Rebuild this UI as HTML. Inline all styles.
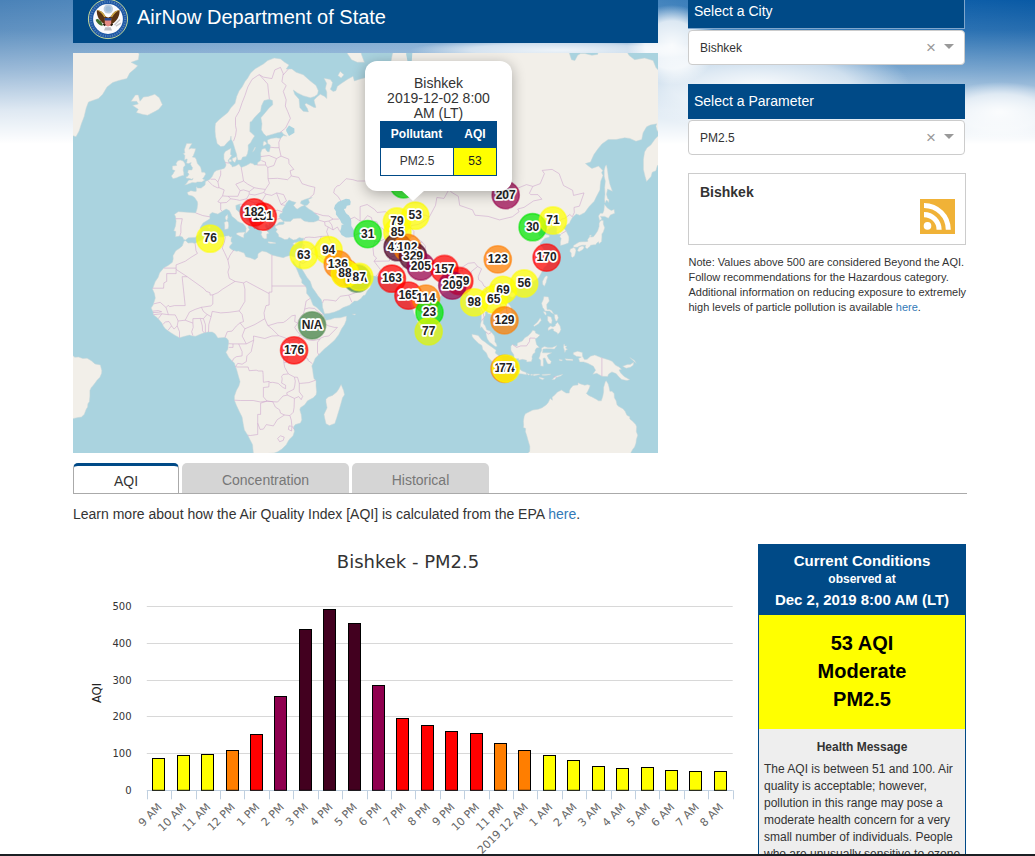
<!DOCTYPE html>
<html lang="en">
<head>
<meta charset="utf-8">
<title>AirNow Department of State</title>
<style>
html,body{margin:0;padding:0}
body{width:1035px;height:856px;overflow:hidden;position:relative;background:#fff;font-family:"Liberation Sans",Arial,sans-serif;color:#333}
.abs{position:absolute}
#sky{left:0;top:0;width:1035px;height:200px;background:linear-gradient(to right,#4a82b8 0%,#5d92c4 25%,#6a9ccb 50%,#3c7fbb 66%,#1565ad 82%,#0a5aa5 100%)}
#skyfade{left:0;top:0;width:1035px;height:200px;background:
radial-gradient(ellipse 45px 40px at 672px 45px,rgba(255,255,255,.95) 0%,rgba(255,255,255,.8) 60%,rgba(255,255,255,0) 100%),
radial-gradient(ellipse 150px 45px at 760px 85px,rgba(255,255,255,.9) 0%,rgba(255,255,255,.6) 60%,rgba(255,255,255,0) 100%),
radial-gradient(ellipse 70px 30px at 1000px 112px,rgba(255,255,255,.9) 0%,rgba(255,255,255,.6) 60%,rgba(255,255,255,0) 100%),
radial-gradient(ellipse 150px 11px at 560px 50px,rgba(255,255,255,.85) 0%,rgba(255,255,255,.6) 60%,rgba(255,255,255,0) 100%),
linear-gradient(to bottom,rgba(255,255,255,0) 0%,rgba(255,255,255,.12) 15%,rgba(255,255,255,.45) 35%,rgba(255,255,255,.82) 55%,#fff 72%)}
#hdr{left:73px;top:0;width:585px;height:43px;background:#004a87}
#hdr .t{position:absolute;left:64px;top:6px;font-size:20px;color:#fff;white-space:nowrap}
#map{left:73px;top:53px;width:585px;height:400px;background:#aad3df;overflow:hidden}
.sh{left:688px;width:277px;height:29px;background:#004a87;color:#fff;font-size:14px}
.sh span{position:absolute;left:6px;top:2px}
.sel{left:688px;width:275px;height:33px;background:#fff;border:1px solid #ccc;border-radius:4px;font-size:12px;color:#333}
.sel span{position:absolute;left:11px;top:10px}
.sel i{position:absolute;font-style:normal}
.sel .x{left:237px;top:7px;font-size:17px;color:#999;font-weight:normal}
.sel .c{left:255px;top:13px;width:0;height:0;border-left:5px solid transparent;border-right:5px solid transparent;border-top:5px solid #999}
#city{left:688px;top:173px;width:276px;height:70px;background:#fff;border:1px solid #ccc}
#city b{position:absolute;left:11px;top:10px;font-size:14px;color:#333}
#rss{left:920px;top:199px;width:35px;height:35px}
#note{left:688.5px;top:255px;width:290px;font-size:11px;line-height:15px;color:#333}
a{color:#337ab7;text-decoration:none}
.tab{top:463px;height:30px;font-size:14px;text-align:center;box-sizing:border-box;border-radius:5px 5px 0 0}
.tab span{display:block;padding-top:9px}
#t1{left:73px;width:106px;background:#fff;border:1px solid #aaa;border-bottom:none;border-top:3px solid #004a87;color:#333}
#t1 span{padding-top:7px}
#t2{left:182px;width:167px;background:#d5d5d5;color:#777}
#t3{left:352px;width:137px;background:#d5d5d5;color:#777}
#tline{left:73px;top:493px;width:894px;height:1px;background:#aaa}
#learn{left:73px;top:506px;font-size:14px;color:#333;white-space:nowrap}
#chart{left:73px;top:530px;width:680px;height:326px}
.yl{font-family:"DejaVu Sans",Verdana,sans-serif;font-size:10px;fill:#333}
.xl{font-family:"DejaVu Sans",Verdana,sans-serif;font-size:11px;fill:#666}
#cc{left:758px;top:544px;width:208px;height:320px;background:#eee;box-sizing:border-box;border-left:1px solid #004a87;border-right:1px solid #004a87}
#cch{left:758px;top:544px;width:208px;height:71px;background:#004a87;color:#fff;text-align:center;font-weight:bold}
#ccy{left:759px;top:615px;width:206px;height:114px;background:#ffff00;color:#000;text-align:center;font-weight:bold;font-size:20px;line-height:28px}
#hm{left:758px;top:740px;width:208px;text-align:center;font-weight:bold;font-size:12px;color:#333}
#hmt{left:764px;top:761px;width:200px;font-size:12px;line-height:17px;color:#333}
#btm{left:0;top:854px;width:1035px;height:2px;background:#1b1f23}
.ml text{font-family:"Liberation Sans",Arial,sans-serif;font-size:12px;font-weight:bold;fill:#222;text-anchor:middle;stroke:#fff;stroke-width:3.6px;stroke-linejoin:round;paint-order:stroke}
#pop{left:292px;top:8px;width:147px;height:130px;background:#fff;border-radius:12px;box-shadow:0 3px 14px rgba(0,0,0,.3)}
#popc{position:absolute;left:0;top:15px;width:147px;text-align:center;font-size:14px;line-height:15px;color:#333}
#pth{left:15px;top:60px;width:117px;height:26px;background:#004a87;color:#fff;font-weight:bold;font-size:12px}
#pth span{position:absolute;top:6px;text-align:center}
#ptd{left:15px;top:86px;width:115px;height:27px;background:#fff;border:1px solid #004a87;font-size:12px;color:#333}
#ptd span{position:absolute;top:0;text-align:center;line-height:27px}
</style>
</head>
<body>
<div id="sky" class="abs"></div>
<div id="skyfade" class="abs"></div>

<div id="hdr" class="abs">
<svg class="abs" style="left:14px;top:-2px;overflow:visible" width="42" height="42" viewBox="0 0 42 42">
<circle cx="21" cy="21" r="19.600" fill="#1d57a3" stroke="#c3d79a" stroke-width="1"/>
<circle cx="21" cy="21" r="17.200" fill="none" stroke="#7fa3d3" stroke-width="2.200" stroke-dasharray="1.100 1.300" opacity=".5"/>
<circle cx="21" cy="21" r="14.900" fill="#fbfbfd"/>
<circle cx="21.300" cy="11" r="4.700" fill="#b9cbdf"/>
<circle cx="21.300" cy="11" r="2.800" fill="#9fbcd8"/>
<path d="M9.800 12.300C12.500 11.800 16 14 18.600 18.500L21.200 19.600L23.800 18.500C26.400 14 29.900 11.800 32.600 12.300C32.800 18 30.200 23.200 25.200 25.800L23.500 27.500H18.900L17.200 25.800C12.200 23.200 9.600 18 9.800 12.300Z" fill="#5b3413"/>
<path d="M9.800 12.300C12.500 11.800 16 14 18.600 18.500L17.300 19.200C15.200 15.600 12.800 13.300 9.800 12.300ZM32.600 12.300C29.900 11.800 26.400 14 23.800 18.500L25.100 19.200C27.200 15.600 29.600 13.300 32.600 12.300Z" fill="#d2ab45"/>
<circle cx="21" cy="17.300" r="1.900" fill="#fff"/>
<path d="M17.800 20h6.400v5.200c0 1.800-1.400 2.800-3.200 3.400-1.800-0.600-3.200-1.600-3.200-3.400z" fill="#e58a84"/>
<path d="M17.800 20h6.400v2.500h-6.400z" fill="#27498f"/>
<path d="M8.800 21.500c1.500-1 3-0.500 3.800 1 1 0.200 2 1.200 2.300 2.500 0.800 0.800 1 1.800 0.600 2.800-2.200-0.300-4.200-1.600-5.400-3.300-0.900-0.900-1.400-2-1.300-3z" fill="#3f7030"/>
<path d="M27 26.500l5.500-5.500 1 1-5.500 5.500zM28.500 27.500l5-3 0.700 1.200-5 3z" fill="#c8c8cc"/>
<path d="M18.300 29.300h5.400l1.300 3.200h-8z" fill="#bdbdc3"/>
<path d="M16.300 26l2 1.500M25.700 26l-2 1.500" stroke="#2a1a0c" stroke-width="1.600"/>
</svg>
<div class="t">AirNow Department of State</div>
</div>

<div id="map" class="abs">
<svg class="abs" style="left:0;top:0" width="585" height="400" viewBox="0 0 585 400">
<path d="M201.2 5.0L207.5 5.9L211.7 9.3L216.0 11.9L213.2 16.0L218.9 16.0L223.1 19.3L230.2 21.7L237.3 28.0L243.0 32.5L245.3 37.7L244.5 41.3L241.6 43.4L237.3 44.8L230.2 42.7L224.5 39.9L220.3 37.0L221.7 41.3L226.0 46.2L226.8 54.4L230.2 58.3L235.4 58.9L234.5 55.7L231.9 51.7L233.1 50.3L237.3 52.4L241.0 54.4L243.0 54.4L241.6 49.7L241.0 46.9L243.9 44.1L247.3 41.3L251.6 43.4L253.8 45.5L253.8 39.1L252.4 35.5L253.6 30.3L251.0 25.3L257.3 26.4L259.5 29.5L258.7 33.3L257.3 36.2L260.1 38.4L262.9 37.7L264.4 33.3L268.6 30.3L274.3 26.4L280.0 23.3L281.4 28.0L285.7 26.4L291.4 24.9L295.7 23.3L299.9 16.9L299.1 15.2L304.2 16.9L311.3 20.1L315.6 22.5L319.8 27.2L323.5 24.1L319.3 17.7L317.8 9.3L319.3 1.4L322.7 -7.8L355.4 -17.5L412.3 -44.6L449.3 -22.6L469.2 -14.5L489.1 -17.5L495.6 -2.2L498.5 6.7L501.9 7.6L504.7 2.3L507.6 0.5L511.8 0.5L518.9 2.3L524.6 1.4L527.5 -8.7L543.1 -6.8L553.1 -3.1L555.9 2.3L561.6 6.7L571.6 5.0L580.1 7.6L582.9 14.4L585.8 17.7L600.0 17.7L611.4 82.6L596.6 83.1L592.3 88.2L592.0 94.2L590.6 96.3L592.0 103.1L588.6 104.1L587.8 109.1L588.3 111.1L584.4 112.5L582.9 117.8L579.2 119.2L578.1 123.4L573.6 128.5L572.1 123.4L570.4 116.4L570.4 106.6L571.6 98.9L574.1 94.7L577.8 92.0L582.1 86.0L587.2 80.9L591.5 73.8L595.7 67.8L591.5 67.8L587.2 73.8L584.4 78.6L582.9 73.2L583.8 70.8L577.3 72.0L573.6 73.8L570.1 79.7L568.7 86.5L563.0 88.2L556.8 85.4L551.7 84.8L543.1 86.5L535.2 86.5L528.9 90.9L524.6 96.3L520.9 101.5L517.5 109.1L512.4 110.6L516.7 114.0L518.9 115.4L521.8 114.5L525.5 113.0L529.8 117.4L528.6 119.7L530.0 122.5L527.8 128.0L527.2 132.5L526.9 136.9L523.2 144.1L521.2 148.3L516.1 153.6L511.8 159.5L506.7 162.2L503.3 161.1L499.6 164.2L496.8 169.1L496.8 169.9L491.9 172.9L490.5 174.7L493.1 178.0L495.9 183.8L495.9 187.3L495.3 190.1L490.5 191.8L487.4 192.5L487.4 189.1L488.2 185.5L486.8 183.8L487.9 181.6L484.2 180.9L483.4 179.1L484.2 175.5L481.7 173.2L477.7 174.3L473.4 177.3L473.7 175.1L475.4 171.0L474.3 169.5L472.0 169.9L468.0 173.2L463.5 175.8L462.6 178.0L465.8 180.9L466.3 183.1L469.2 182.3L471.4 180.9L476.3 182.3L476.3 184.1L472.0 185.2L470.0 187.3L467.2 190.5L466.9 191.5L470.0 194.9L471.7 198.7L474.6 202.0L474.6 204.7L471.7 206.7L474.9 208.0L473.7 212.6L471.2 214.2L468.0 220.6L465.5 225.0L462.9 226.8L459.8 229.0L454.9 230.9L452.7 232.1L450.7 232.4L447.8 233.9L442.1 235.5L441.3 238.2L440.2 237.9L440.2 234.9L436.5 234.3L434.7 234.6L431.6 236.7L430.8 238.5L428.8 241.5L430.8 245.7L433.6 249.3L435.9 251.1L437.9 254.0L438.7 258.4L438.4 262.8L437.3 264.8L433.6 267.2L431.6 267.7L431.1 270.1L427.4 272.4L425.9 272.6L426.2 269.2L425.1 267.5L422.5 266.9L420.8 264.6L419.4 262.5L416.8 261.1L414.8 260.8L414.8 258.7L413.7 258.4L412.3 259.0L412.3 262.2L411.1 264.3L410.3 267.5L410.3 270.6L412.3 272.9L413.7 276.7L416.5 277.8L418.8 279.5L421.4 283.0L421.9 285.8L421.9 288.7L423.4 290.9L424.2 293.2L422.2 293.5L419.4 291.2L416.3 288.9L414.3 285.8L413.1 281.8L413.1 279.0L411.4 277.5L408.6 273.8L407.4 274.9L407.4 271.5L408.3 268.6L408.3 264.3L408.3 261.4L407.2 257.0L405.7 252.6L405.5 249.6L403.2 248.1L401.5 249.6L399.2 251.7L396.1 251.1L396.9 246.6L396.1 243.0L394.1 239.7L392.1 238.5L390.4 236.4L389.2 232.1L387.8 230.6L385.3 231.2L384.7 233.3L381.0 233.6L378.7 233.9L375.3 234.6L375.0 236.7L373.6 239.1L370.2 240.3L366.8 244.2L362.2 248.1L359.7 250.2L357.9 251.7L355.7 253.4L355.7 257.0L356.2 259.6L355.1 262.8L354.8 267.7L353.4 267.7L352.3 270.6L350.3 271.8L348.3 274.1L345.7 271.8L344.6 268.6L343.2 264.6L340.9 260.2L339.5 255.5L338.0 252.6L336.3 248.1L335.2 242.4L334.6 238.5L335.2 234.6L334.1 233.9L333.2 235.8L329.8 237.0L326.9 236.1L323.8 232.1L326.9 231.2L327.8 229.9L323.0 229.3L321.8 227.8L319.5 226.8L318.4 224.3L317.0 222.5L311.3 223.1L304.2 223.4L301.3 223.1L295.7 222.5L290.8 221.2L289.7 217.4L287.1 217.4L282.9 218.7L278.6 217.4L277.2 215.5L274.3 214.5L272.3 211.3L270.6 207.7L267.2 206.4L265.8 207.7L264.4 208.3L264.4 210.0L265.8 212.6L266.6 215.5L269.5 218.0L270.3 219.9L270.6 222.1L272.3 224.3L272.3 222.1L272.9 220.3L274.6 221.2L274.3 225.0L274.6 226.2L277.2 226.2L281.4 226.2L282.9 225.3L285.1 222.8L287.4 220.3L288.3 219.3L288.0 221.8L288.8 225.3L291.4 227.5L294.5 228.1L297.9 231.5L297.1 234.6L294.2 237.9L292.2 242.1L290.0 242.7L288.0 245.4L284.3 248.1L281.4 248.1L276.3 252.3L270.1 254.6L266.4 257.0L261.5 259.0L255.8 260.5L251.6 260.8L251.0 259.0L249.6 254.3L249.3 249.9L248.2 246.6L245.0 242.7L242.2 238.5L239.3 234.6L237.3 228.4L233.9 224.3L231.7 220.6L228.8 215.8L227.4 213.9L226.8 209.3L225.4 214.2L225.1 214.8L223.4 212.6L221.7 210.3L220.6 208.0L220.0 209.3L220.8 211.6L223.1 214.8L224.5 218.0L226.8 223.7L228.8 226.8L228.8 229.9L232.5 233.0L233.6 236.1L233.6 240.3L237.3 245.1L239.6 251.1L240.2 252.3L243.9 254.6L246.7 257.6L250.1 261.1L251.0 264.0L253.0 267.2L257.3 266.6L261.5 265.1L267.2 264.8L273.5 263.1L273.2 267.2L271.5 271.5L268.6 275.8L265.8 281.5L261.5 287.2L256.7 291.5L251.6 295.8L247.3 300.0L244.5 302.9L242.2 305.2L240.8 308.9L238.8 312.9L239.6 316.6L240.2 321.5L241.0 325.8L243.0 327.5L243.0 333.0L243.6 338.9L243.0 341.8L240.2 344.8L234.5 347.8L231.7 351.7L227.4 354.7L226.8 356.8L228.2 361.4L228.8 366.9L227.4 370.1L222.3 371.6L220.6 373.8L221.4 378.6L220.0 382.8L216.0 386.7L213.2 391.7L208.9 396.1L204.6 398.8L200.9 400.1L194.7 400.5L190.4 400.8L184.7 402.9L180.5 401.2L179.9 395.7L179.6 391.7L177.0 386.7L174.8 382.2L171.4 377.0L170.2 370.7L169.1 364.1L166.2 358.3L163.4 352.3L161.4 347.2L161.4 343.3L163.4 337.4L165.9 333.0L167.1 328.7L165.4 322.9L163.4 315.7L162.5 313.7L161.4 310.0L159.1 308.0L155.7 304.3L153.4 300.0L152.9 299.2L154.9 296.3L155.1 292.9L155.7 290.1L155.4 287.2L153.4 285.0L152.0 284.4L147.7 284.7L144.9 285.0L142.1 280.7L139.2 279.0L134.9 279.0L131.2 279.8L127.8 281.0L122.7 283.2L119.3 283.0L116.5 282.1L110.8 283.5L106.5 284.7L102.2 282.4L97.1 279.2L92.3 275.8L90.3 272.9L88.9 270.1L85.7 266.3L83.7 264.3L80.3 261.7L80.0 258.7L78.1 254.9L80.3 251.7L80.9 249.6L82.3 245.1L81.5 240.6L79.5 236.1L82.3 228.4L85.2 224.3L86.6 219.9L90.9 214.8L95.1 212.6L99.4 209.3L100.2 206.0L100.0 202.7L102.8 197.7L106.2 195.6L109.3 192.9L111.1 188.0L112.8 187.7L115.0 190.1L119.3 189.8L122.1 190.5L125.0 188.4L129.3 186.6L132.1 185.5L136.4 184.5L142.1 184.5L146.3 183.8L150.0 184.1L153.4 183.1L156.0 182.7L157.1 184.1L159.1 183.8L158.0 185.9L158.0 188.4L159.4 190.1L156.6 193.2L156.6 194.9L159.4 197.0L163.4 198.3L165.4 198.0L171.1 200.0L172.8 203.7L177.6 205.0L181.9 206.7L184.7 204.4L185.0 200.7L189.0 198.0L193.5 199.0L198.9 202.0L204.6 203.4L210.3 204.7L213.2 203.4L216.0 202.7L218.9 203.0L219.7 203.7L223.1 204.0L225.4 203.0L226.8 200.0L227.4 197.7L228.8 194.6L229.9 191.5L229.7 188.0L230.8 185.2L228.8 185.2L226.3 184.5L223.1 186.6L220.3 187.0L216.0 184.5L214.6 186.3L211.7 186.6L208.3 184.8L205.8 183.8L205.2 180.9L202.9 178.7L204.3 176.6L202.4 174.7L202.4 173.1L206.1 171.8L210.3 171.4L211.5 170.1L210.6 169.1L210.9 168.2L213.7 168.4L217.4 168.4L220.3 165.7L224.5 165.3L227.7 165.3L231.1 168.0L235.9 169.1L240.8 169.1L245.9 167.2L246.2 163.8L243.0 161.1L239.3 157.9L235.9 156.0L233.9 154.4L232.2 152.8L234.5 151.9L236.5 149.5L235.4 146.6L239.3 144.5L236.5 145.0L232.5 146.2L228.2 147.9L227.4 150.3L231.4 152.4L228.2 153.6L224.5 156.0L223.1 155.6L220.6 152.4L223.1 149.5L218.9 148.3L216.0 147.0L213.2 150.3L212.0 152.8L209.5 156.4L209.2 159.9L207.2 160.7L206.1 163.4L207.5 165.7L210.2 168.0L210.0 168.9L206.1 169.3L203.8 171.4L202.1 172.3L201.8 170.3L198.9 169.5L196.1 170.3L195.8 172.9L194.4 172.1L193.0 171.0L192.1 172.9L193.3 175.5L193.8 178.0L196.1 180.2L193.8 180.9L193.8 185.5L191.8 185.9L189.6 184.5L188.1 181.3L189.0 179.1L187.0 177.3L185.3 174.7L183.0 171.8L183.3 167.2L181.9 164.6L179.0 162.6L174.8 159.5L171.1 156.8L169.1 152.8L167.1 154.0L166.8 151.1L162.8 152.4L163.1 156.4L166.5 159.5L168.2 163.8L171.1 165.7L173.9 166.1L173.3 167.6L176.2 169.1L180.5 172.5L179.3 173.2L176.2 171.4L175.1 174.3L176.5 176.6L174.8 178.7L172.5 180.6L172.8 178.0L173.3 175.5L172.2 172.9L169.9 170.6L168.2 169.9L164.8 168.4L162.5 166.1L159.1 163.4L157.7 160.3L156.3 157.6L153.1 156.0L149.2 158.3L144.9 161.1L142.1 160.3L139.2 159.5L136.7 161.5L136.9 163.8L136.9 165.7L134.1 167.6L130.1 169.9L127.8 173.6L127.0 175.1L128.4 177.3L126.1 180.2L125.6 181.6L122.1 184.5L115.3 184.8L112.5 187.0L110.8 186.6L109.6 184.1L106.8 183.1L102.5 183.8L102.8 178.4L100.8 177.7L102.5 172.9L103.1 168.4L102.5 163.4L101.4 161.5L105.1 158.7L110.8 159.1L117.0 159.5L122.7 159.9L124.1 155.6L124.7 151.1L124.4 148.7L121.6 144.5L119.3 142.9L115.3 142.0L114.2 139.5L117.9 137.7L122.1 138.6L123.3 138.2L123.3 133.8L124.7 135.1L128.1 135.1L132.1 132.0L132.4 128.5L136.4 126.7L139.2 123.4L141.2 119.2L143.5 117.4L147.7 116.4L151.2 115.4L152.3 114.0L153.1 112.0L152.3 109.1L150.9 106.1L150.9 101.0L152.3 98.4L158.0 95.2L157.4 101.5L158.8 102.5L156.8 105.1L155.1 107.6L156.0 110.1L158.8 112.5L159.1 114.0L162.5 113.0L165.9 111.1L168.2 114.5L173.3 112.5L177.6 110.1L180.7 111.1L181.0 112.0L184.2 112.0L184.7 109.6L187.6 107.6L187.9 104.1L187.6 100.0L189.0 96.3L192.1 95.2L194.1 98.4L196.1 98.9L197.2 94.7L197.2 92.0L194.7 90.4L194.4 87.1L198.1 85.4L203.2 84.8L207.5 85.4L210.3 82.6L213.7 83.1L210.3 80.9L208.9 79.1L204.6 79.7L198.9 81.4L193.3 83.1L190.4 80.3L188.4 76.8L189.0 70.8L187.9 64.7L191.8 60.2L196.1 55.0L199.8 51.7L199.5 47.6L196.4 46.2L191.0 47.6L188.4 53.0L187.6 58.3L185.6 60.2L181.3 64.7L178.5 68.4L177.0 69.0L176.8 76.8L176.8 78.6L179.6 80.9L181.6 83.1L179.3 86.5L177.6 89.8L175.1 92.0L175.3 96.3L174.5 100.5L173.1 103.6L169.6 104.1L168.2 107.1L164.8 107.1L164.0 104.1L163.7 101.5L162.0 96.3L161.7 95.2L159.7 88.7L158.3 86.5L158.0 83.1L157.1 87.1L154.9 88.7L151.2 93.1L147.7 93.6L144.0 90.4L143.8 88.7L142.6 83.7L142.1 78.6L142.1 73.8L142.6 70.2L146.3 66.5L150.0 63.4L154.9 59.6L157.7 55.0L162.0 50.3L163.7 43.4L166.2 37.7L169.1 34.0L171.9 28.7L174.8 24.9L177.6 20.1L181.9 16.0L186.1 13.5L190.4 11.0L194.7 7.6ZM111.6 132.0L115.9 130.7L119.3 129.4L122.4 129.8L124.4 128.9L128.7 128.9L131.8 127.1L129.5 125.7L130.7 124.4L132.7 121.1L131.5 119.2L128.7 119.2L128.1 115.9L127.5 114.0L124.4 110.6L123.3 106.6L122.1 104.6L119.3 104.1L120.4 102.5L121.9 98.4L122.7 95.8L118.2 95.2L115.9 96.3L116.7 94.2L119.0 90.4L113.6 90.4L112.5 93.6L111.3 96.8L111.9 100.0L110.2 100.5L111.9 102.5L111.6 107.1L113.3 106.1L114.2 106.1L113.9 109.1L113.3 110.1L115.3 110.6L118.2 109.6L117.6 111.6L118.7 113.5L119.6 114.5L119.0 116.9L115.3 116.9L114.7 119.7L116.2 121.1L114.5 123.4L112.8 123.9L113.6 125.3L115.9 125.3L118.7 126.2L120.2 125.3L119.3 127.1L115.9 127.1L114.7 128.5L113.6 130.3ZM110.8 122.5L109.6 122.5L106.5 123.4L103.7 124.8L100.0 125.7L98.3 123.0L100.2 120.7L101.1 118.8L102.2 117.8L99.4 116.4L99.4 113.0L103.7 112.5L103.1 110.6L104.5 108.1L107.1 107.1L110.2 108.1L111.9 110.6L112.2 112.5L110.5 114.0L110.2 117.4L110.8 119.7ZM58.1 48.3L62.4 42.0L65.3 42.0L67.0 48.3L70.4 44.1L75.2 43.4L81.8 41.3L86.3 44.8L89.4 51.7L85.7 56.3L82.3 58.3L74.6 62.2L70.1 61.5L63.3 59.6L65.3 56.3L59.6 52.4L65.3 51.0L63.8 48.3ZM3.0 83.7L6.1 78.0L8.4 70.8L11.2 63.4L13.2 55.0L15.5 49.0L21.2 46.9L25.4 45.5L29.7 41.3L34.0 34.0L39.7 29.5L46.8 27.2L53.9 25.6L56.7 20.1L62.4 15.2L64.7 12.7L58.1 9.3L65.3 6.7L66.1 1.4L63.8 -5.9L65.3 -12.6L-28.6 -12.6L-28.6 70.8L-8.7 78.0L-3.0 81.4L-0.7 82.6ZM1.8 304.3L5.5 304.0L9.8 305.5L14.1 305.2L18.3 307.7L22.0 310.9L27.4 312.0L28.3 315.7L28.8 317.4L28.6 320.3L26.9 324.3L24.0 327.2L22.0 330.1L19.7 333.0L18.3 334.5L16.9 337.4L16.9 343.3L16.3 348.7L14.9 350.8L14.6 354.1L13.2 356.2L11.2 361.4L8.4 364.1L5.0 364.5L0.7 365.4L-3.9 367.6L-28.6 370.7L-28.6 300.0L-3.0 300.0ZM268.1 331.6L270.6 337.4L271.5 341.8L269.5 344.8L268.3 349.3L266.6 355.3L263.8 364.5L261.8 370.4L256.4 372.6L253.0 370.7L251.9 366.0L251.0 361.4L254.1 354.7L253.0 349.3L253.0 346.3L255.3 343.9L259.5 342.4L263.8 338.9L265.8 336.0ZM355.4 269.2L358.8 272.9L360.5 275.8L360.2 278.7L357.1 280.4L355.1 277.5L354.8 274.4L355.4 271.5ZM530.3 167.6L530.3 171.0L531.7 174.7L530.3 179.1L528.9 180.9L528.9 184.1L528.6 188.4L526.1 190.8L525.5 188.7L523.8 190.1L522.6 191.8L520.9 191.8L517.5 192.2L517.2 193.2L515.5 194.6L514.1 196.0L512.1 194.3L512.7 192.2L509.0 192.2L506.1 193.2L504.2 194.3L500.5 194.3L500.5 192.5L503.3 190.8L506.1 189.1L509.8 188.7L512.7 188.7L514.7 188.4L514.7 186.3L516.7 183.8L516.7 182.3L518.4 182.0L517.5 184.1L520.4 183.8L522.6 180.9L524.6 178.0L526.1 173.6L526.1 170.6L526.9 168.4L528.6 167.2ZM526.6 167.6L528.9 166.1L527.5 163.4L528.9 163.4L531.7 163.4L535.4 165.3L537.4 161.9L541.7 160.3L541.1 156.4L538.3 157.6L534.6 155.2L531.5 151.5L530.9 157.6L529.8 160.3L527.2 160.3L525.5 163.0ZM500.5 194.6L502.4 195.6L503.0 197.7L501.6 203.0L499.6 204.4L498.2 203.4L498.2 200.0L496.8 198.3L497.3 196.0L499.0 195.3ZM510.7 193.6L511.0 194.9L509.6 196.7L506.1 198.7L504.4 197.7L505.9 194.3L509.0 192.9ZM533.5 112.0L534.6 117.8L535.4 124.4L536.9 131.2L539.4 138.2L534.6 136.0L533.5 141.2L534.6 145.4L536.0 146.6L535.7 149.5L533.7 147.0L532.0 149.9L531.5 146.2L532.0 141.2L531.7 134.7L532.3 128.0L531.2 123.4L531.2 117.4L532.3 113.0ZM473.4 222.8L474.9 223.7L473.7 226.8L473.1 229.6L471.4 233.3L469.7 231.2L469.5 228.4L471.2 225.0L472.0 223.7ZM442.7 238.8L443.6 240.3L442.1 242.7L439.6 244.5L437.0 243.6L436.7 241.2L438.7 239.4L440.7 239.1ZM470.9 243.6L475.4 243.9L476.3 248.1L473.7 251.4L474.0 256.4L476.3 256.4L478.6 257.6L480.8 261.1L478.6 259.9L476.6 258.1L472.0 257.9L470.9 256.1L469.7 254.6L468.6 250.2L470.3 246.6ZM470.3 258.7L472.6 258.7L473.4 261.1L472.6 262.2L471.4 260.8ZM481.4 261.4L484.2 261.4L485.4 264.8L484.0 268.0L482.8 268.0L481.7 264.8ZM474.6 263.1L478.0 264.0L479.1 267.2L478.6 270.6L476.6 270.3L474.6 267.5ZM484.5 269.2L487.1 272.9L487.9 276.4L486.8 279.2L484.8 281.2L484.2 279.8L480.5 277.8L480.5 276.1L478.8 275.8L475.1 277.5L475.1 274.9L477.7 272.9L480.0 274.1L482.5 272.6L482.5 271.5ZM467.2 264.8L468.3 267.2L465.5 270.9L461.2 273.5L460.6 272.6L464.3 269.2L466.3 266.3ZM437.9 292.9L439.6 291.5L441.6 292.4L444.1 293.2L444.4 290.1L449.3 288.1L451.8 284.7L454.9 283.0L457.8 280.1L459.8 277.2L462.1 278.1L462.6 280.1L466.9 282.1L464.0 285.0L462.3 285.5L462.9 288.7L463.5 291.5L466.3 294.4L463.5 294.9L462.1 297.2L462.1 299.5L460.1 300.9L458.9 303.7L459.2 305.7L458.4 308.6L453.8 308.9L453.5 307.2L449.3 306.3L445.8 307.2L445.6 305.7L441.3 305.7L440.7 301.5L438.2 298.1L437.9 296.3ZM398.9 281.2L405.2 282.4L407.4 285.2L408.6 286.7L412.3 289.2L415.1 291.5L419.4 294.4L420.8 295.5L423.1 297.2L422.2 300.0L425.1 302.3L426.2 303.7L429.3 305.7L428.8 308.6L428.8 313.7L427.1 314.0L425.1 313.2L422.2 311.2L418.8 308.3L415.1 304.3L413.4 300.0L409.7 296.3L408.9 292.4L405.7 290.4L400.9 285.8L399.2 283.5ZM427.9 316.6L429.3 314.0L431.6 314.6L435.9 315.2L436.7 316.3L441.9 316.9L443.3 315.4L448.1 316.9L448.4 317.7L453.2 319.5L453.5 321.8L449.3 320.9L443.6 320.6L440.7 319.7L436.5 319.2L430.5 318.3ZM453.5 320.3L456.9 321.2L455.5 322.3ZM457.8 321.2L459.8 321.2L459.2 322.6L457.8 322.3ZM460.1 321.2L466.3 320.9L466.9 321.5L460.6 322.9ZM468.9 321.5L477.7 320.9L477.1 321.8L472.0 322.6L468.9 322.3ZM466.3 324.1L471.4 325.5L469.7 326.7L466.3 325.2ZM479.1 326.7L482.0 323.5L489.9 321.2L487.7 322.9L483.4 324.6L481.7 326.4ZM468.6 294.9L471.4 293.5L474.9 294.4L479.1 294.6L484.0 292.6L481.4 296.1L477.7 295.8L473.4 295.8L470.0 296.1L469.5 299.8L473.4 299.8L478.8 299.8L474.9 301.8L474.0 302.6L475.7 305.7L478.3 308.6L477.4 310.9L474.9 310.9L473.7 308.9L472.0 304.9L470.0 305.5L470.3 307.2L470.3 310.9L470.3 313.2L467.7 312.9L467.7 307.2L465.8 305.2L466.9 302.9L467.2 300.6L468.6 297.5ZM491.4 290.9L491.9 292.9L493.9 292.9L492.5 294.9L494.5 296.3L492.8 297.2L491.9 299.5L491.1 296.3L490.5 294.4L490.8 291.5ZM491.9 305.7L499.9 306.3L499.9 307.7L493.3 307.2ZM486.2 306.3L489.6 306.9L488.5 308.0L486.2 307.4ZM500.5 299.5L504.7 298.3L509.3 299.5L509.6 303.5L511.5 306.6L514.1 306.3L517.5 303.2L521.8 302.0L528.0 304.6L536.0 306.9L539.1 308.3L542.6 312.3L546.0 314.0L548.5 316.3L546.0 316.9L547.7 320.0L551.1 323.5L556.8 326.7L553.9 327.5L548.8 326.4L546.3 324.3L543.1 320.6L538.9 318.9L535.7 320.9L534.6 323.5L528.9 323.2L523.8 320.3L519.8 321.2L522.6 317.2L520.4 313.2L514.7 310.3L510.7 308.9L506.7 308.9L505.6 305.5L508.4 304.0L503.3 303.2L500.2 301.2ZM549.7 313.2L554.5 311.4L557.3 311.4L560.8 309.2L560.2 312.3L557.3 314.3L553.1 315.2ZM556.8 304.6L561.6 307.4L563.0 310.3L561.3 308.6ZM451.2 363.2L452.4 360.8L454.9 359.5L459.8 357.1L465.2 356.2L469.2 354.7L473.4 351.7L475.4 349.3L477.1 345.4L479.4 347.2L479.1 344.2L482.0 341.8L484.2 339.2L488.5 337.1L491.4 338.9L493.1 340.1L496.2 340.1L496.5 337.4L497.6 335.4L499.9 332.7L501.9 332.2L505.0 331.9L505.0 329.8L507.6 331.0L511.8 332.2L514.7 331.6L517.2 332.5L516.1 335.4L514.4 338.9L513.3 340.4L516.1 342.7L518.9 343.9L523.2 346.3L525.5 347.8L528.3 347.8L529.8 343.3L530.6 338.9L530.6 334.5L531.5 331.6L532.3 328.7L533.2 327.8L535.2 331.0L536.0 333.9L536.9 338.3L538.9 338.3L541.1 340.4L541.4 344.8L543.1 347.8L544.0 351.7L545.4 353.2L550.2 355.9L552.2 358.6L553.9 362.3L556.8 363.8L556.8 366.0L559.6 368.2L562.7 371.6L563.6 373.8L563.3 378.6L564.7 382.2L563.3 386.7L563.0 390.0L561.6 394.0L559.6 396.4L557.9 399.8L555.9 407.1L454.9 407.1L454.9 400.1L456.7 398.4L456.9 393.4L456.4 391.7L454.9 386.7L453.8 382.8L452.4 378.6L452.7 375.4L450.4 374.5L450.7 372.3L450.4 368.2ZM159.1 105.6L163.4 103.6L163.7 105.6L162.0 109.6L159.7 108.1ZM155.7 106.6L158.3 106.6L158.6 108.6L156.3 109.1ZM179.6 98.9L181.9 94.2L182.7 94.2L181.3 97.3ZM190.4 93.1L193.8 90.9L193.3 89.8L191.8 88.2L190.4 88.7L190.1 91.5ZM163.4 180.2L165.9 179.5L172.2 179.1L170.8 182.0L170.8 184.8L168.5 184.1L163.7 181.6ZM151.2 169.5L154.0 168.0L155.4 169.5L155.7 172.9L155.1 175.8L151.7 176.6L151.7 172.1ZM154.6 161.5L154.9 164.6L154.0 167.6L152.3 166.1L152.3 163.8L153.7 162.2ZM195.0 189.8L197.5 190.5L202.6 190.5L202.6 189.8L198.9 189.1L195.0 188.7ZM219.7 190.8L221.7 192.2L224.5 190.8L226.3 188.4L223.1 189.4L221.4 189.4ZM134.7 174.3L136.7 173.2L137.5 174.0L136.4 175.5ZM274.3 0.5L278.6 6.7L284.3 9.3L291.4 9.3L288.5 1.4L285.7 -7.8L275.7 -7.8ZM264.9 22.5L267.2 18.5L270.9 21.7L268.1 24.9ZM279.4 261.1L282.9 261.1L281.4 261.9Z" fill="#f2efe9" stroke="#c8d7d9" stroke-width="0.5"/>
<path d="M262.1 151.9L265.2 148.7L268.6 147.4L272.9 145.8L276.6 146.2L277.7 148.7L277.2 151.9L273.8 152.8L272.9 155.6L270.9 156.0L272.6 159.5L273.8 161.1L275.7 162.2L278.0 166.1L278.3 169.1L278.3 172.9L280.0 175.5L281.1 177.3L281.1 182.0L281.4 183.8L275.7 184.5L272.9 184.5L268.6 182.0L266.9 178.7L268.1 175.5L268.6 171.8L270.9 171.4L268.6 170.3L267.2 167.2L265.2 164.6L262.9 161.5L262.9 158.3L261.0 155.6ZM213.2 78.0L216.0 83.1L221.4 79.7L221.4 75.6L216.0 72.6L213.2 76.2ZM334.1 -12.6L333.2 1.4L334.9 10.2L337.2 22.5L334.1 34.0L332.1 39.9L334.9 39.9L337.8 31.8L340.0 24.1L338.3 14.4L339.2 1.4L340.6 -12.6Z" fill="#aad3df"/>
<path d="M160.5 88.2L162.5 82.6L163.4 76.8L162.5 72.6L162.5 64.7L166.2 58.3L169.1 49.7L171.9 42.7L174.8 34.0L179.0 26.4L184.7 22.5L186.4 21.7M186.4 21.7L194.7 31.0L195.5 39.1L196.4 46.2M186.4 21.7L190.4 24.1L198.9 25.6L201.8 16.9L207.5 14.4L210.3 20.9L210.0 22.1M215.4 16.0L210.0 22.1L208.9 28.7L213.2 32.5L210.3 38.4L213.2 46.9L212.3 53.0L214.6 58.3L217.4 65.3L212.6 75.0L206.9 79.7M207.5 85.4L205.8 89.3L206.1 94.7L208.0 103.1L215.7 106.1L216.0 110.6L220.8 116.4L217.1 117.8L218.3 123.0L225.7 124.4L229.1 130.7L235.9 132.9L241.9 134.3L240.8 141.2L236.5 145.0M197.2 94.2L201.8 94.7L206.1 94.7M187.6 103.6L196.1 102.5L203.5 105.6L208.0 103.1M203.5 105.6L200.9 112.5L194.7 114.5L195.0 121.1L195.0 125.7L196.4 130.3L192.4 136.4M195.0 125.7L204.6 125.3L214.6 126.7L218.3 123.0M184.2 112.0L192.7 112.0L192.4 109.1L188.4 107.6M192.7 112.0L194.7 114.5M168.2 114.5L169.4 121.1L170.5 128.0L162.8 131.2L167.1 137.7L170.5 136.9L176.2 138.6L181.3 134.7L174.8 131.2L170.5 128.0M181.3 134.7L186.1 135.6L192.4 136.4L190.7 139.5L193.0 141.2M152.3 109.6L156.0 110.1M147.7 117.4L147.7 122.1L144.9 128.9L145.5 132.0L146.0 134.7L151.2 136.9L149.5 142.9L155.1 143.3L164.8 143.3L167.1 137.7M137.5 126.2L142.1 126.2L144.9 128.9M134.9 127.6L139.8 132.5L144.3 134.7L146.0 134.7M149.5 142.9L144.9 148.7L147.7 149.9L153.4 149.5L157.7 145.8L155.1 143.3M157.7 145.8L163.4 146.6L166.8 147.4L173.6 145.8L176.2 141.2L176.2 138.6M147.7 149.9L147.7 156.8L149.2 158.3M122.7 159.9L129.8 162.6L136.9 163.8M102.5 165.7L109.3 165.7L107.9 172.9L107.9 179.5L106.8 183.1M176.5 141.2L181.9 142.0L190.7 139.5M193.0 141.2L188.4 148.7L185.6 149.1L181.6 149.9L175.1 147.4L173.6 145.8M166.8 151.1L171.9 151.5L175.1 147.4M181.6 149.9L181.9 154.0L183.6 157.6L182.4 159.5L180.5 163.4M172.8 152.8L173.3 156.8L177.6 161.5L180.5 163.4M172.8 152.8L181.9 154.0M193.0 141.2L198.7 142.4L203.5 139.9L208.0 151.5L212.0 152.4M203.5 139.9L210.6 141.6L213.5 147.9L208.0 151.5M185.6 149.1L188.7 154.4L192.4 156.8L198.9 158.7L204.6 157.2L209.2 158.7M192.4 156.8L191.5 164.2L193.0 168.0L197.5 167.2L202.6 166.5L207.5 165.3M202.6 166.5L201.8 169.9M184.7 174.0L187.6 169.9L193.0 168.0M187.6 169.9L186.1 165.7L183.0 165.7M186.1 165.7L191.5 164.2M186.1 165.7L185.0 162.2L182.4 159.5M241.6 159.9L250.1 162.6L255.8 163.0L260.1 166.1L265.8 166.1M245.9 167.2L251.6 168.8L255.8 168.0L260.1 166.1M251.6 168.8L252.1 172.5L255.3 174.0L260.1 176.9L264.4 174.0L266.9 178.7M255.8 168.0L258.7 171.8L260.1 176.9M255.3 174.0L253.6 178.7L255.3 183.1L248.4 183.4L241.6 184.5L235.9 184.1L232.2 184.5L230.8 187.3M255.3 183.1L257.0 187.3L259.2 190.5L257.0 194.3L258.7 197.7L264.1 201.0L263.5 204.4L265.8 207.7M248.4 183.4L245.0 191.5L238.2 196.3L230.2 199.4L229.1 196.7L231.4 192.2L229.9 191.8M238.2 196.3L239.3 200.4L233.1 202.7L235.9 206.0L234.5 207.7L230.2 210.3L227.4 209.6M229.1 196.7L228.8 199.7L228.8 202.7L227.4 209.6L225.4 203.4M239.3 200.4L247.3 204.0L255.0 210.3L260.1 210.6L262.9 212.6L265.5 212.6M260.1 210.6L261.5 207.7L263.5 207.4L264.4 208.0M249.6 249.9L250.7 246.9L254.4 246.9L260.1 247.5L262.9 248.1L267.2 243.3L275.7 242.1L284.3 239.1L286.3 233.0L284.8 230.9L277.5 229.9L274.6 226.2M275.7 242.1L278.9 249.3M284.8 230.9L286.6 226.8L287.1 224.0L288.3 224.0M272.6 224.7L273.5 225.0M267.8 147.9L264.9 143.3L260.7 139.9L261.5 136.0L264.1 132.9L266.4 132.5L273.2 125.7L280.0 126.7L284.3 128.0L294.2 128.0L302.8 126.7L301.3 118.8L304.2 114.0L312.7 112.0L324.1 107.6L329.8 113.0L336.9 114.0L345.4 112.5L346.9 117.4L355.4 128.9L363.9 128.0L371.0 134.3L376.2 136.0M376.2 136.0L371.0 145.4L363.9 144.5L362.5 152.4L356.2 164.2L352.5 162.2L342.6 162.2L338.3 160.7L336.9 163.4L329.8 164.2L324.1 168.0L321.3 170.3L317.0 168.8L315.6 163.8L315.9 161.5L312.4 158.7L304.2 159.5L301.6 156.4L294.2 151.5L287.1 153.6L287.1 168.0L281.4 164.2L277.2 166.1M287.1 168.0L290.0 168.0L294.5 162.6L298.5 164.6L299.1 168.0L303.9 168.8L305.6 172.9L311.3 176.9L317.0 182.3M281.1 182.7L287.1 179.8L294.2 181.6L301.9 185.2L301.9 188.7L307.0 188.0L311.3 186.3L312.2 183.4L317.0 182.3L321.3 183.8L325.5 181.6L329.8 178.7L331.5 184.8L340.9 183.1M301.9 188.7L299.9 194.3L300.8 202.7L303.6 205.0L301.1 208.3L316.4 208.0L316.7 204.7L325.0 201.4L326.9 197.0L330.1 193.9L331.5 185.9L340.9 183.1M301.1 208.3L307.6 216.8L306.5 218.7L303.1 223.1M356.2 164.2L349.7 169.1L345.4 171.4L338.3 172.5L337.8 174.7L340.9 178.4L340.9 183.1M337.8 174.7L331.2 174.7L328.4 172.9L325.0 169.9L329.5 164.2M328.4 172.9L322.7 174.7L319.8 175.8L321.3 180.2L321.3 183.8M329.8 164.2L327.5 168.4L334.1 171.0L331.2 174.7M340.9 183.1L349.1 189.1L352.5 193.2L352.0 199.4L354.0 204.4L358.2 207.0L355.7 211.6L363.9 216.1L371.0 218.3L378.4 219.3L378.4 214.5L371.0 213.2L361.1 207.0L358.2 207.0M378.4 214.5L381.0 216.1L388.4 214.8L389.8 217.7L383.3 218.3L380.4 217.7L378.4 219.3M388.4 214.8L395.2 210.3L401.5 209.6L404.6 213.5M349.1 189.1L338.3 191.8L339.7 198.3L340.0 204.4L335.5 209.3L329.8 214.8L325.8 217.4L329.2 221.5L329.8 225.6L323.5 225.9L321.8 227.8M378.4 219.3L378.7 223.7L381.0 233.0M378.7 223.7L383.3 222.8L390.4 223.4L390.1 226.8L387.2 227.8L388.4 229.9L390.4 227.8L391.2 235.2L390.4 236.4M383.3 218.3L383.3 222.8M391.2 235.2L392.9 229.9L396.9 223.1L398.6 218.3L404.6 213.5L408.6 215.8L405.2 223.7L405.7 226.8L409.1 229.3L410.9 233.0L413.7 234.6L415.7 235.5M412.6 238.2L413.7 234.6M415.7 235.5L412.6 238.2L409.1 240.0L406.0 243.6L405.7 248.1L408.3 251.1L407.2 254.0L410.0 259.9L411.1 264.3L408.9 267.7M415.7 235.5L418.3 231.8L420.8 231.5L425.9 230.6L429.1 229.9L431.6 233.0L435.0 234.6M418.3 231.8L420.8 236.7L425.4 237.6L423.7 240.6L427.1 243.6L430.8 248.1L433.6 252.6L433.6 255.2M412.6 238.2L416.0 240.6L415.1 246.0L418.3 244.5L422.2 243.9L425.9 247.5L427.9 252.6L427.1 256.1L429.3 256.1L433.6 255.2M427.1 256.1L425.1 255.8L420.2 256.4L419.4 260.5L420.5 263.4M433.6 255.2L433.9 261.9L429.3 263.7L428.8 265.7L425.1 267.5M412.8 278.7L415.4 281.0L418.3 279.5M376.2 136.0L378.1 139.0L385.3 143.3L386.7 152.4L399.5 156.8L402.0 162.2L415.1 163.4L426.5 166.9L439.3 163.8L446.1 158.7L444.7 156.0L451.0 154.4L460.6 147.9L468.9 146.2L464.9 141.6L457.8 141.6L456.4 140.3L459.8 133.4M376.2 136.0L383.0 132.9L390.9 128.9L398.1 132.5L406.6 132.0L407.4 123.4L418.5 126.7L418.8 129.8L429.3 131.2L436.5 135.1L443.6 135.6L453.5 131.6L459.8 133.4L467.2 130.7L471.4 120.7L469.2 117.4L479.1 116.4L486.2 120.7L490.5 132.5L499.6 137.3L500.5 142.4L511.0 139.9L506.4 153.2L501.0 154.4L501.3 159.5L499.3 163.8M499.3 163.8L496.8 161.5L491.9 165.3L488.8 166.1L481.7 173.2M488.2 180.9L493.1 178.0M198.9 202.0L198.9 233.0L232.8 233.0M198.9 233.0L198.9 239.1L196.1 239.1L196.1 240.6L173.3 228.4L170.5 229.9L162.0 228.4L156.3 225.3L154.9 219.0L156.3 214.2L154.9 207.0L157.1 202.0L160.8 197.0M154.9 207.0L151.4 199.4L149.2 194.9L151.4 189.1L152.3 184.1M122.1 190.5L123.0 197.7L124.4 200.4L117.9 204.4L112.2 208.3L103.1 211.9L103.1 216.4L114.2 223.7L131.2 235.8L133.0 238.2L136.9 239.7L137.2 242.1L139.8 241.8L144.9 239.7L149.2 236.4L162.0 228.4M103.1 215.1L90.9 215.1M103.1 216.4L103.1 220.6L93.7 220.6L93.7 228.4L90.9 229.9L90.6 235.2L79.5 235.2M114.2 223.7L109.1 223.7L112.2 252.6L101.4 252.6L96.8 253.7L95.1 252.3L93.1 254.6L87.2 249.3L80.9 250.8M139.8 241.8L139.8 251.1L137.8 252.9L130.7 254.0L128.4 254.3L122.1 256.4L116.5 259.0L112.2 267.2L105.1 268.0L104.2 265.7L102.2 261.9L95.4 261.7L93.1 254.6M170.5 229.9L171.9 236.1L171.9 248.4L166.2 257.9L156.3 259.3L147.7 259.9L139.2 258.4L138.1 263.7L135.8 271.5L135.5 279.0M128.4 254.3L130.4 258.4L134.1 261.4L138.1 263.7M134.1 261.4L130.4 265.7L127.3 265.4L119.9 265.7L119.9 270.1L120.2 274.4L118.7 278.7L119.9 282.7M112.2 267.2L119.9 270.1M130.4 265.7L132.4 271.5L132.4 279.5M127.3 265.4L129.3 272.9L129.5 277.8L131.2 279.8M105.1 268.0L104.2 272.9L106.5 278.7L106.5 284.7M104.2 272.9L101.1 276.1L98.5 272.9L95.1 277.2M98.5 272.9L97.4 270.6L96.0 268.6L92.3 268.9L90.0 271.5M95.4 261.7L88.9 260.8L85.2 265.7M88.9 260.8L80.3 261.7M80.0 258.1L85.2 257.6L88.6 258.7L85.2 259.3L80.0 259.6M196.1 240.6L196.1 252.0L193.0 252.6L191.0 259.9L191.8 265.7L181.9 271.5L171.9 275.8L167.1 269.8L170.5 268.6L169.1 261.4L166.2 257.9M152.0 284.4L154.3 278.7L159.1 278.1L163.4 272.9L167.1 269.8M171.9 275.8L169.1 283.0L173.3 290.9L180.7 287.2L180.5 283.0L191.8 285.5L198.9 283.0L205.8 282.7M173.3 290.9L165.7 290.9L160.0 290.9L155.7 290.7M160.0 290.9L160.0 294.4L155.7 294.4M165.7 290.9L169.1 298.6L169.1 302.9L163.4 303.7L160.5 305.7L159.4 308.3M180.7 287.2L178.2 298.6L173.9 302.9L173.3 308.6L169.1 311.2L164.8 310.3L162.5 313.7M191.8 265.7L194.7 272.4L198.9 275.8L205.8 282.7L211.7 284.7L215.7 287.0M194.7 272.4L196.1 272.4L204.6 269.8L210.3 269.5L213.2 267.7L218.9 262.8L222.3 262.2L221.7 268.6L224.8 270.1L225.4 267.2L227.4 264.3L230.5 260.8L231.7 256.1L233.1 248.1L237.6 245.1M231.7 256.1L235.9 254.9L241.6 255.5L248.4 261.4L246.7 265.7L250.1 265.7L250.1 270.1L255.8 272.9L261.5 274.4L264.4 274.4L255.8 283.0L251.6 283.5L247.3 285.2L247.0 286.1L244.5 289.2L244.5 299.5L245.9 302.0M248.4 261.4L250.4 260.8M250.1 265.7L251.0 264.3M224.8 270.1L221.7 274.4L224.5 278.7L227.4 281.8L230.2 284.7L235.9 287.0L240.2 287.5L247.0 286.1M227.4 281.8L224.5 285.2L226.0 287.2L227.4 292.1L224.5 296.6L224.3 300.0L235.1 306.0L234.8 307.2L239.3 310.6M224.5 285.2L218.9 287.0L215.7 287.0L216.9 290.9L212.6 295.5L212.0 301.2L214.6 300.3L215.4 300.0L224.3 300.0M212.0 301.2L210.3 304.9L210.9 309.7L211.7 314.3L215.4 320.9M214.6 300.3L215.4 304.0L214.6 304.0L213.2 309.4L210.9 309.7M210.3 304.9L214.6 304.0M215.4 320.9L221.4 324.1L224.5 324.3L226.3 330.4L227.4 330.4L235.9 329.6L242.7 327.2M215.4 320.9L210.0 321.5L208.6 323.5L209.2 325.8L208.6 330.1L212.6 332.2L212.6 335.7L210.0 334.5L205.2 330.4L199.8 329.3L197.0 329.6L196.1 328.4L195.8 333.9L190.4 334.5L190.4 343.9L194.1 348.1L199.8 348.7M162.5 313.7L164.8 314.0L175.1 314.0L176.2 317.7L183.3 317.2L185.6 318.0L189.8 318.0L190.1 321.5L190.4 329.3L196.1 328.4M221.4 324.1L222.3 328.1L221.7 333.0L220.8 336.3L213.7 339.8L214.3 342.1L221.4 345.4L225.7 343.6L228.2 346.6L229.7 343.3L226.3 338.9L226.3 330.4M214.3 342.1L210.0 343.0L204.6 349.0L199.8 348.7M221.4 345.4L221.1 354.4L220.3 359.2L216.9 362.6L211.5 362.0L207.5 360.1L206.6 356.8L202.4 354.1L199.8 348.7M216.9 362.6L218.3 367.2L218.9 373.2L221.4 376.4M218.3 373.2L216.0 372.9L215.4 376.4L218.6 378.0L218.9 373.2M211.5 362.0L204.3 366.6L200.4 372.9L193.3 371.6L190.4 376.1L187.0 376.4L184.7 370.1L184.7 361.4L187.6 361.4L187.6 350.2L194.1 348.1L199.8 348.7M184.7 370.1L184.7 381.5L177.3 382.5L174.8 382.2M161.4 347.2L167.7 347.5L180.2 347.5L187.6 349.0L194.1 348.1M204.6 385.4L207.5 382.8L211.2 384.1L210.3 387.4L206.6 388.7L204.6 385.4M439.6 291.5L443.6 294.4L447.8 292.9L453.5 292.9L456.4 288.7L456.9 285.0L462.1 285.2M528.9 304.6L528.9 323.2M480.5 323.8L483.7 324.1M-18.7 284.7L-21.5 290.1L-25.8 290.9" fill="none" stroke="#cfa8cf" stroke-width="0.8" stroke-opacity="0.75" stroke-linejoin="round"/>
</svg>
<svg class="abs" style="left:0;top:0" width="585" height="400" viewBox="0 0 585 400">
<circle cx="330.5" cy="131.3" r="13.6" fill="#00e400" fill-opacity="0.72" stroke="#00e400" stroke-opacity="0.55" stroke-width="1.6"/>
<circle cx="432.7" cy="142.1" r="13.6" fill="#99004c" fill-opacity="0.72" stroke="#99004c" stroke-opacity="0.55" stroke-width="1.6"/>
<circle cx="189.8" cy="163.7" r="13.6" fill="#ff0000" fill-opacity="0.72" stroke="#ff0000" stroke-opacity="0.55" stroke-width="1.6"/>
<circle cx="181.0" cy="159.4" r="13.6" fill="#ff0000" fill-opacity="0.72" stroke="#ff0000" stroke-opacity="0.55" stroke-width="1.6"/>
<circle cx="137.2" cy="185.7" r="13.6" fill="#ffff00" fill-opacity="0.72" stroke="#ffff00" stroke-opacity="0.55" stroke-width="1.6"/>
<circle cx="230.8" cy="202.0" r="13.6" fill="#ffff00" fill-opacity="0.72" stroke="#ffff00" stroke-opacity="0.55" stroke-width="1.6"/>
<circle cx="255.6" cy="197.2" r="13.6" fill="#ffff00" fill-opacity="0.72" stroke="#ffff00" stroke-opacity="0.55" stroke-width="1.6"/>
<circle cx="264.8" cy="211.3" r="13.6" fill="#ff7e00" fill-opacity="0.72" stroke="#ff7e00" stroke-opacity="0.55" stroke-width="1.6"/>
<circle cx="284.0" cy="225.5" r="13.6" fill="#5a8f5a" fill-opacity="0.85" stroke="#5a8f5a" stroke-opacity="0.55" stroke-width="1.6"/>
<circle cx="272.6" cy="220.2" r="13.6" fill="#ff7e00" fill-opacity="0.72" stroke="#ff7e00" stroke-opacity="0.55" stroke-width="1.6"/>
<circle cx="271.9" cy="220.6" r="13.6" fill="#ffff00" fill-opacity="0.72" stroke="#ffff00" stroke-opacity="0.55" stroke-width="1.6"/>
<circle cx="286.3" cy="224.0" r="13.6" fill="#ffff00" fill-opacity="0.72" stroke="#ffff00" stroke-opacity="0.55" stroke-width="1.6"/>
<circle cx="294.7" cy="181.1" r="13.6" fill="#00e400" fill-opacity="0.72" stroke="#00e400" stroke-opacity="0.55" stroke-width="1.6"/>
<circle cx="324.0" cy="168.5" r="13.6" fill="#ffff00" fill-opacity="0.72" stroke="#ffff00" stroke-opacity="0.55" stroke-width="1.6"/>
<circle cx="342.3" cy="162.7" r="13.6" fill="#ffff00" fill-opacity="0.72" stroke="#ffff00" stroke-opacity="0.55" stroke-width="1.6"/>
<circle cx="324.4" cy="179.4" r="13.6" fill="#ffff00" fill-opacity="0.72" stroke="#ffff00" stroke-opacity="0.55" stroke-width="1.6"/>
<circle cx="324.6" cy="194.2" r="13.6" fill="#4c0026" fill-opacity="0.72" stroke="#4c0026" stroke-opacity="0.55" stroke-width="1.6"/>
<circle cx="334.3" cy="194.8" r="13.6" fill="#ff7e00" fill-opacity="0.72" stroke="#ff7e00" stroke-opacity="0.55" stroke-width="1.6"/>
<circle cx="340.0" cy="203.2" r="13.6" fill="#4c0026" fill-opacity="0.72" stroke="#4c0026" stroke-opacity="0.55" stroke-width="1.6"/>
<circle cx="347.8" cy="213.5" r="13.6" fill="#99004c" fill-opacity="0.72" stroke="#99004c" stroke-opacity="0.55" stroke-width="1.6"/>
<circle cx="318.9" cy="225.7" r="13.6" fill="#ff0000" fill-opacity="0.72" stroke="#ff0000" stroke-opacity="0.55" stroke-width="1.6"/>
<circle cx="371.5" cy="216.0" r="13.6" fill="#ff0000" fill-opacity="0.72" stroke="#ff0000" stroke-opacity="0.55" stroke-width="1.6"/>
<circle cx="386.3" cy="228.0" r="13.6" fill="#ff0000" fill-opacity="0.72" stroke="#ff0000" stroke-opacity="0.55" stroke-width="1.6"/>
<circle cx="379.3" cy="232.6" r="13.6" fill="#99004c" fill-opacity="0.72" stroke="#99004c" stroke-opacity="0.55" stroke-width="1.6"/>
<circle cx="335.4" cy="242.6" r="13.6" fill="#ff0000" fill-opacity="0.72" stroke="#ff0000" stroke-opacity="0.55" stroke-width="1.6"/>
<circle cx="353.0" cy="245.6" r="13.6" fill="#ff7e00" fill-opacity="0.72" stroke="#ff7e00" stroke-opacity="0.55" stroke-width="1.6"/>
<circle cx="356.5" cy="259.4" r="13.6" fill="#00e400" fill-opacity="0.72" stroke="#00e400" stroke-opacity="0.55" stroke-width="1.6"/>
<circle cx="355.7" cy="278.4" r="13.6" fill="#e0f500" fill-opacity="0.72" stroke="#e0f500" stroke-opacity="0.55" stroke-width="1.6"/>
<circle cx="459.6" cy="174.2" r="13.6" fill="#00e400" fill-opacity="0.72" stroke="#00e400" stroke-opacity="0.55" stroke-width="1.6"/>
<circle cx="480.0" cy="167.5" r="13.6" fill="#ffff00" fill-opacity="0.72" stroke="#ffff00" stroke-opacity="0.55" stroke-width="1.6"/>
<circle cx="473.6" cy="204.6" r="13.6" fill="#ff0000" fill-opacity="0.72" stroke="#ff0000" stroke-opacity="0.55" stroke-width="1.6"/>
<circle cx="424.8" cy="206.4" r="13.6" fill="#ff7e00" fill-opacity="0.72" stroke="#ff7e00" stroke-opacity="0.55" stroke-width="1.6"/>
<circle cx="401.3" cy="249.4" r="13.6" fill="#ffff00" fill-opacity="0.72" stroke="#ffff00" stroke-opacity="0.55" stroke-width="1.6"/>
<circle cx="430.0" cy="236.9" r="13.6" fill="#ffff00" fill-opacity="0.72" stroke="#ffff00" stroke-opacity="0.55" stroke-width="1.6"/>
<circle cx="420.7" cy="246.3" r="13.6" fill="#ffff00" fill-opacity="0.72" stroke="#ffff00" stroke-opacity="0.55" stroke-width="1.6"/>
<circle cx="451.2" cy="230.5" r="13.6" fill="#ffff00" fill-opacity="0.72" stroke="#ffff00" stroke-opacity="0.55" stroke-width="1.6"/>
<circle cx="431.5" cy="267.4" r="13.6" fill="#ff7e00" fill-opacity="0.72" stroke="#ff7e00" stroke-opacity="0.55" stroke-width="1.6"/>
<circle cx="431.6" cy="315.8" r="13.6" fill="#ff7e00" fill-opacity="0.72" stroke="#ff7e00" stroke-opacity="0.55" stroke-width="1.6"/>
<circle cx="432.8" cy="315.6" r="13.6" fill="#ffff00" fill-opacity="0.72" stroke="#ffff00" stroke-opacity="0.55" stroke-width="1.6"/>
<circle cx="239.1" cy="272.3" r="13.6" fill="#5a8f5a" fill-opacity="0.85" stroke="#5a8f5a" stroke-opacity="0.55" stroke-width="1.6"/>
<circle cx="221.1" cy="297.3" r="13.6" fill="#ff0000" fill-opacity="0.72" stroke="#ff0000" stroke-opacity="0.55" stroke-width="1.6"/>
<g class="ml">
<text x="432.7" y="145.7">207</text>
<text x="189.8" y="167.3">181</text>
<text x="181.0" y="163.0">182</text>
<text x="137.2" y="189.3">76</text>
<text x="230.8" y="205.6">63</text>
<text x="255.6" y="200.8">94</text>
<text x="264.8" y="214.9">136</text>
<text x="284.0" y="229.1">N/A</text>
<text x="271.9" y="224.2">88</text>
<text x="286.3" y="227.6">87</text>
<text x="294.7" y="184.7">31</text>
<text x="324.0" y="172.1">79</text>
<text x="342.3" y="166.3">53</text>
<text x="324.4" y="183.0">85</text>
<text x="324.6" y="197.8">410</text>
<text x="334.3" y="198.4">102</text>
<text x="340.0" y="206.8">329</text>
<text x="347.8" y="217.1">205</text>
<text x="318.9" y="229.3">163</text>
<text x="371.5" y="219.6">157</text>
<text x="386.3" y="231.6">179</text>
<text x="379.3" y="236.2">209</text>
<text x="335.4" y="246.2">165</text>
<text x="353.0" y="249.2">114</text>
<text x="356.5" y="263.0">23</text>
<text x="355.7" y="282.0">77</text>
<text x="459.6" y="177.8">30</text>
<text x="480.0" y="171.1">71</text>
<text x="473.6" y="208.2">170</text>
<text x="424.8" y="210.0">123</text>
<text x="401.3" y="253.0">98</text>
<text x="430.0" y="240.5">69</text>
<text x="420.7" y="249.9">65</text>
<text x="451.2" y="234.1">56</text>
<text x="431.5" y="271.0">129</text>
<text x="431.6" y="319.4">174</text>
<text x="432.8" y="319.2">77</text>
<text x="239.1" y="275.9">N/A</text>
<text x="221.1" y="300.9">176</text>
</g></svg>
<div class="abs" id="pop"><div id="popc">Bishkek<br>2019-12-02 8:00<br>AM (LT)</div>
<div id="pth" class="abs"><span style="left:0;width:73px">Pollutant</span><span style="left:73px;width:44px">AQI</span></div>
<div id="ptd" class="abs"><span style="left:0;width:72px;line-height:27px">PM2.5</span><span style="left:72px;width:42px;height:27px;background:#ffff00;border-left:1px solid #004a87;color:#222">53</span></div>
</div>
<svg class="abs" style="left:328px;top:137px" width="24" height="12" viewBox="0 0 24 12"><path d="M0 0H24L12 11Z" fill="#fff"/></svg>
</div>

<div class="abs sh" style="top:0;height:28px;border-right:1px solid #7fa6cc;border-bottom:1px solid #7fa6cc;width:276px"><span style="top:3px">Select a City</span></div>
<div class="abs sel" style="top:30px"><span>Bishkek</span><i class="x">×</i><i class="c"></i></div>
<div class="abs sh" style="top:84px;height:35px"><span style="top:9px">Select a Parameter</span></div>
<div class="abs sel" style="top:120px"><span>PM2.5</span><i class="x">×</i><i class="c"></i></div>

<div id="city" class="abs"><b>Bishkek</b></div>
<svg id="rss" class="abs" viewBox="0 0 35 35">
<rect width="35" height="35" fill="#f0b237"/>
<circle cx="7.500" cy="26.900" r="3.800" fill="#fff"/>
<path d="M4 15.600a15.100 15.100 0 0 1 15.100 15.100" fill="none" stroke="#fff" stroke-width="5.100"/>
<path d="M4 6.400a24.300 24.300 0 0 1 24.300 24.300" fill="none" stroke="#fff" stroke-width="5"/>
</svg>
<div id="note" class="abs">Note: Values above 500 are considered Beyond the AQI.<br>Follow recommendations for the Hazardous category.<br>Additional information on reducing exposure to extremely<br>high levels of particle pollution is available <a>here</a>.</div>

<div id="t1" class="abs tab"><span>AQI</span></div>
<div id="t2" class="abs tab"><span>Concentration</span></div>
<div id="t3" class="abs tab"><span>Historical</span></div>
<div id="tline" class="abs"></div>
<div id="learn" class="abs">Learn more about how the Air Quality Index [AQI] is calculated from the EPA <a>here</a>.</div>

<svg id="chart" class="abs" style="left:0;top:0;width:1035px;height:856px;pointer-events:none" viewBox="0 0 1035 856">
<text x="408" y="568" text-anchor="middle" style="font-family:'DejaVu Sans',Verdana,sans-serif;font-size:18px;fill:#333">Bishkek - PM2.5</text>
<text x="101" y="693" text-anchor="middle" transform="rotate(-90 101 693)" style="font-family:'DejaVu Sans',Verdana,sans-serif;font-size:11.5px;fill:#222">AQI</text>
<path d="M146.8 790.5H732.7" stroke="#c0d0e0" stroke-width="1"/>
<text x="131.5" y="793.5" text-anchor="end" class="yl">0</text>
<path d="M146.8 753.5H732.7" stroke="#d8d8d8" stroke-width="1"/>
<text x="131.5" y="756.5" text-anchor="end" class="yl">100</text>
<path d="M146.8 716.5H732.7" stroke="#d8d8d8" stroke-width="1"/>
<text x="131.5" y="719.5" text-anchor="end" class="yl">200</text>
<path d="M146.8 680.5H732.7" stroke="#d8d8d8" stroke-width="1"/>
<text x="131.5" y="683.5" text-anchor="end" class="yl">300</text>
<path d="M146.8 643.5H732.7" stroke="#d8d8d8" stroke-width="1"/>
<text x="131.5" y="646.5" text-anchor="end" class="yl">400</text>
<path d="M146.8 606.5H732.7" stroke="#d8d8d8" stroke-width="1"/>
<text x="131.5" y="609.5" text-anchor="end" class="yl">500</text>
<path d="M147.5 790.3v9" stroke="#c0d0e0" stroke-width="1"/>
<path d="M171.5 790.3v9" stroke="#c0d0e0" stroke-width="1"/>
<path d="M196.5 790.3v9" stroke="#c0d0e0" stroke-width="1"/>
<path d="M220.5 790.3v9" stroke="#c0d0e0" stroke-width="1"/>
<path d="M244.5 790.3v9" stroke="#c0d0e0" stroke-width="1"/>
<path d="M269.5 790.3v9" stroke="#c0d0e0" stroke-width="1"/>
<path d="M293.5 790.3v9" stroke="#c0d0e0" stroke-width="1"/>
<path d="M318.5 790.3v9" stroke="#c0d0e0" stroke-width="1"/>
<path d="M342.5 790.3v9" stroke="#c0d0e0" stroke-width="1"/>
<path d="M367.5 790.3v9" stroke="#c0d0e0" stroke-width="1"/>
<path d="M391.5 790.3v9" stroke="#c0d0e0" stroke-width="1"/>
<path d="M415.5 790.3v9" stroke="#c0d0e0" stroke-width="1"/>
<path d="M440.5 790.3v9" stroke="#c0d0e0" stroke-width="1"/>
<path d="M464.5 790.3v9" stroke="#c0d0e0" stroke-width="1"/>
<path d="M489.5 790.3v9" stroke="#c0d0e0" stroke-width="1"/>
<path d="M513.5 790.3v9" stroke="#c0d0e0" stroke-width="1"/>
<path d="M537.5 790.3v9" stroke="#c0d0e0" stroke-width="1"/>
<path d="M562.5 790.3v9" stroke="#c0d0e0" stroke-width="1"/>
<path d="M586.5 790.3v9" stroke="#c0d0e0" stroke-width="1"/>
<path d="M611.5 790.3v9" stroke="#c0d0e0" stroke-width="1"/>
<path d="M635.5 790.3v9" stroke="#c0d0e0" stroke-width="1"/>
<path d="M659.5 790.3v9" stroke="#c0d0e0" stroke-width="1"/>
<path d="M684.5 790.3v9" stroke="#c0d0e0" stroke-width="1"/>
<path d="M708.5 790.3v9" stroke="#c0d0e0" stroke-width="1"/>
<path d="M733.5 790.3v9" stroke="#c0d0e0" stroke-width="1"/>
<rect x="152.5" y="758.5" width="12" height="31.8" fill="#ffff00" stroke="#000" stroke-width="1"/>
<text x="162.5" y="807.8" text-anchor="end" transform="rotate(-45 162.5 807.8)" class="xl">9 AM</text>
<rect x="177.5" y="755.5" width="12" height="34.8" fill="#ffff00" stroke="#000" stroke-width="1"/>
<text x="186.9" y="807.8" text-anchor="end" transform="rotate(-45 186.9 807.8)" class="xl">10 AM</text>
<rect x="201.5" y="754.5" width="12" height="35.8" fill="#ffff00" stroke="#000" stroke-width="1"/>
<text x="211.3" y="807.8" text-anchor="end" transform="rotate(-45 211.3 807.8)" class="xl">11 AM</text>
<rect x="226.5" y="750.5" width="12" height="39.8" fill="#ff7e00" stroke="#000" stroke-width="1"/>
<text x="235.7" y="807.8" text-anchor="end" transform="rotate(-45 235.7 807.8)" class="xl">12 PM</text>
<rect x="250.5" y="734.5" width="12" height="55.8" fill="#ff0000" stroke="#000" stroke-width="1"/>
<text x="260.2" y="807.8" text-anchor="end" transform="rotate(-45 260.2 807.8)" class="xl">1 PM</text>
<rect x="274.5" y="696.5" width="12" height="93.8" fill="#8f004f" stroke="#000" stroke-width="1"/>
<text x="284.6" y="807.8" text-anchor="end" transform="rotate(-45 284.6 807.8)" class="xl">2 PM</text>
<rect x="299.5" y="629.5" width="12" height="160.8" fill="#42001f" stroke="#000" stroke-width="1"/>
<text x="309.0" y="807.8" text-anchor="end" transform="rotate(-45 309.0 807.8)" class="xl">3 PM</text>
<rect x="323.5" y="609.5" width="12" height="180.8" fill="#42001f" stroke="#000" stroke-width="1"/>
<text x="333.4" y="807.8" text-anchor="end" transform="rotate(-45 333.4 807.8)" class="xl">4 PM</text>
<rect x="348.5" y="623.5" width="12" height="166.8" fill="#42001f" stroke="#000" stroke-width="1"/>
<text x="357.8" y="807.8" text-anchor="end" transform="rotate(-45 357.8 807.8)" class="xl">5 PM</text>
<rect x="372.5" y="685.5" width="12" height="104.8" fill="#8f004f" stroke="#000" stroke-width="1"/>
<text x="382.2" y="807.8" text-anchor="end" transform="rotate(-45 382.2 807.8)" class="xl">6 PM</text>
<rect x="396.5" y="718.5" width="12" height="71.8" fill="#ff0000" stroke="#000" stroke-width="1"/>
<text x="406.6" y="807.8" text-anchor="end" transform="rotate(-45 406.6 807.8)" class="xl">7 PM</text>
<rect x="421.5" y="725.5" width="12" height="64.8" fill="#ff0000" stroke="#000" stroke-width="1"/>
<text x="431.0" y="807.8" text-anchor="end" transform="rotate(-45 431.0 807.8)" class="xl">8 PM</text>
<rect x="445.5" y="731.5" width="12" height="58.8" fill="#ff0000" stroke="#000" stroke-width="1"/>
<text x="455.5" y="807.8" text-anchor="end" transform="rotate(-45 455.5 807.8)" class="xl">9 PM</text>
<rect x="470.5" y="733.5" width="12" height="56.8" fill="#ff0000" stroke="#000" stroke-width="1"/>
<text x="479.9" y="807.8" text-anchor="end" transform="rotate(-45 479.9 807.8)" class="xl">10 PM</text>
<rect x="494.5" y="743.5" width="12" height="46.8" fill="#ff7e00" stroke="#000" stroke-width="1"/>
<text x="504.3" y="807.8" text-anchor="end" transform="rotate(-45 504.3 807.8)" class="xl">11 PM</text>
<rect x="518.5" y="750.5" width="12" height="39.8" fill="#ff7e00" stroke="#000" stroke-width="1"/>
<text x="528.7" y="807.8" text-anchor="end" transform="rotate(-45 528.7 807.8)" class="xl">Dec 2, 2019 12 AM</text>
<rect x="543.5" y="755.5" width="12" height="34.8" fill="#ffff00" stroke="#000" stroke-width="1"/>
<text x="553.1" y="807.8" text-anchor="end" transform="rotate(-45 553.1 807.8)" class="xl">1 AM</text>
<rect x="567.5" y="760.5" width="12" height="29.8" fill="#ffff00" stroke="#000" stroke-width="1"/>
<text x="577.5" y="807.8" text-anchor="end" transform="rotate(-45 577.5 807.8)" class="xl">2 AM</text>
<rect x="592.5" y="766.5" width="12" height="23.8" fill="#ffff00" stroke="#000" stroke-width="1"/>
<text x="601.9" y="807.8" text-anchor="end" transform="rotate(-45 601.9 807.8)" class="xl">3 AM</text>
<rect x="616.5" y="768.5" width="12" height="21.8" fill="#ffff00" stroke="#000" stroke-width="1"/>
<text x="626.3" y="807.8" text-anchor="end" transform="rotate(-45 626.3 807.8)" class="xl">4 AM</text>
<rect x="641.5" y="767.5" width="12" height="22.8" fill="#ffff00" stroke="#000" stroke-width="1"/>
<text x="650.8" y="807.8" text-anchor="end" transform="rotate(-45 650.8 807.8)" class="xl">5 AM</text>
<rect x="665.5" y="770.5" width="12" height="19.8" fill="#ffff00" stroke="#000" stroke-width="1"/>
<text x="675.2" y="807.8" text-anchor="end" transform="rotate(-45 675.2 807.8)" class="xl">6 AM</text>
<rect x="689.5" y="771.5" width="12" height="18.8" fill="#ffff00" stroke="#000" stroke-width="1"/>
<text x="699.6" y="807.8" text-anchor="end" transform="rotate(-45 699.6 807.8)" class="xl">7 AM</text>
<rect x="714.5" y="771.5" width="12" height="18.8" fill="#ffff00" stroke="#000" stroke-width="1"/>
<text x="724.0" y="807.8" text-anchor="end" transform="rotate(-45 724.0 807.8)" class="xl">8 AM</text>
</svg>

<div id="cc" class="abs"></div>
<div id="cch" class="abs">
<div style="font-size:15px;padding-top:8px;line-height:18px">Current Conditions</div>
<div style="font-size:12px;line-height:18px">observed at</div>
<div style="font-size:15px;line-height:23px">Dec 2, 2019 8:00 AM (LT)</div>
</div>
<div id="ccy" class="abs"><div style="padding-top:14px">53 AQI</div><div>Moderate</div><div>PM2.5</div></div>
<div id="hm" class="abs">Health Message</div>
<div id="hmt" class="abs">The AQI is between 51 and 100. Air quality is acceptable; however, pollution in this range may pose a moderate health concern for a very small number of individuals. People who are unusually sensitive to ozone may experience respiratory symptoms.</div>
<div id="btm" class="abs"></div>
</body>
</html>
